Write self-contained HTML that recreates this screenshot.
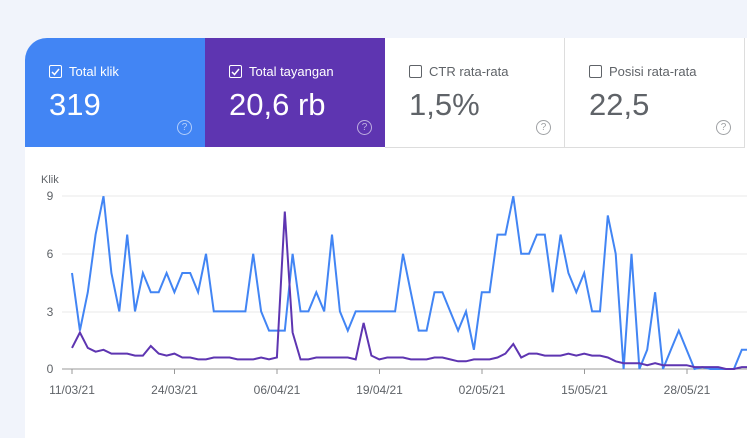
<!DOCTYPE html>
<html><head><meta charset="utf-8"><style>
body{margin:0;width:747px;height:428px;background:#f1f4fb;font-family:"Liberation Sans",sans-serif;overflow:hidden;position:relative}
.card{position:absolute;left:25px;top:38px;width:722px;height:400px;background:#fff;border-top-left-radius:22px;overflow:hidden}
.tile{position:absolute;top:0;height:109px;width:180px}
.lab{position:absolute;left:24px;top:26px;font-size:13px;display:flex;align-items:center}
.cb{width:11px;height:11px;border:1px solid currentColor;border-radius:2px;margin-right:7px;position:relative}
.val{position:absolute;left:24px;top:49px;font-size:31px}
.q{position:absolute;right:13px;top:82px;width:13px;height:13px;border:1.3px solid currentColor;border-radius:50%;font-size:10px;text-align:center;line-height:13px;opacity:.6}
</style></head><body>
<div class="card">
<div class="tile" style="left:0;background:#4285f4;color:#fff"><div class="lab"><span class="cb"><svg width="11" height="11" style="position:absolute;left:0;top:0"><path d="M2 6l2.5 2.5L9 3" stroke="#fff" stroke-width="1.5" fill="none"/></svg></span>Total klik</div><div class="val">319</div><div class="q">?</div></div>
<div class="tile" style="left:180px;background:#5e35b1;color:#fff"><div class="lab"><span class="cb"><svg width="11" height="11" style="position:absolute;left:0;top:0"><path d="M2 6l2.5 2.5L9 3" stroke="#fff" stroke-width="1.5" fill="none"/></svg></span>Total tayangan</div><div class="val">20,6 rb</div><div class="q">?</div></div>
<div class="tile" style="left:360px;width:179px;color:#5f6368;border-right:1px solid #ddd;border-bottom:1px solid #ddd"><div class="lab"><span class="cb"></span>CTR rata-rata</div><div class="val">1,5%</div><div class="q">?</div></div>
<div class="tile" style="left:540px;width:179px;color:#5f6368;border-right:1px solid #ddd;border-bottom:1px solid #ddd"><div class="lab"><span class="cb"></span>Posisi rata-rata</div><div class="val">22,5</div><div class="q">?</div></div>
</div>
<svg id="ch" width="747" height="428" style="position:absolute;left:0;top:0" font-family="Liberation Sans" font-size="12" fill="#5f6368"></svg>
<script>
var s='<text x="41" y="183" font-size="11">Klik</text>';
[[9,196],[6,254],[3,312],[0,369]].forEach(function(g){s+='<line x1="62" x2="747" y1="'+g[1]+'" y2="'+g[1]+'" stroke="'+(g[0]?'#e8e8e8':'#999')+'"/><text x="50" y="'+(g[1]+4)+'" text-anchor="middle">'+g[0]+'</text>';});
['11/03/21','24/03/21','06/04/21','19/04/21','02/05/21','15/05/21','28/05/21'].forEach(function(t,i){var x=72+102.5*i;s+='<line x1="'+x+'" x2="'+x+'" y1="369" y2="374" stroke="#999"/><text x="'+x+'" y="394" text-anchor="middle">'+t+'</text>';});
var b=[5,2,4,7,9,5,3,7,3,5,4,4,5,4,5,5,4,6,3,3,3,3,3,6,3,2,2,2,6,3,3,4,3,7,3,2,3,3,3,3,3,3,6,4,2,2,4,4,3,2,3,1,4,4,7,7,9,6,6,7,7,4,7,5,4,5,3,3,8,6,0,6,0,1,4,0,1,2,1,0,0.1,0,0,0,0,1,1];
var p=[1.1,1.9,1.1,0.9,1,0.8,0.8,0.8,0.7,0.7,1.2,0.8,0.7,0.8,0.6,0.6,0.5,0.5,0.6,0.6,0.6,0.5,0.5,0.5,0.6,0.5,0.6,8.2,1.9,0.5,0.5,0.6,0.6,0.6,0.6,0.6,0.5,2.4,0.7,0.5,0.6,0.6,0.6,0.5,0.5,0.5,0.6,0.6,0.5,0.4,0.4,0.5,0.5,0.5,0.6,0.8,1.3,0.6,0.8,0.8,0.7,0.7,0.7,0.8,0.7,0.8,0.7,0.7,0.6,0.4,0.3,0.3,0.3,0.2,0.3,0.2,0.2,0.2,0.2,0.1,0.1,0.1,0.1,0,0,0.1,0.1];
function pl(a,c){return '<polyline fill="none" stroke="'+c+'" stroke-width="2" points="'+a.map(function(v,i){return (72+7.88*i).toFixed(1)+','+(369-v*19.2).toFixed(1)}).join(' ')+'"/>';}
s+=pl(b,'#4285f4')+pl(p,'#5e35b1');
document.getElementById('ch').innerHTML=s;
</script>
</body></html>
